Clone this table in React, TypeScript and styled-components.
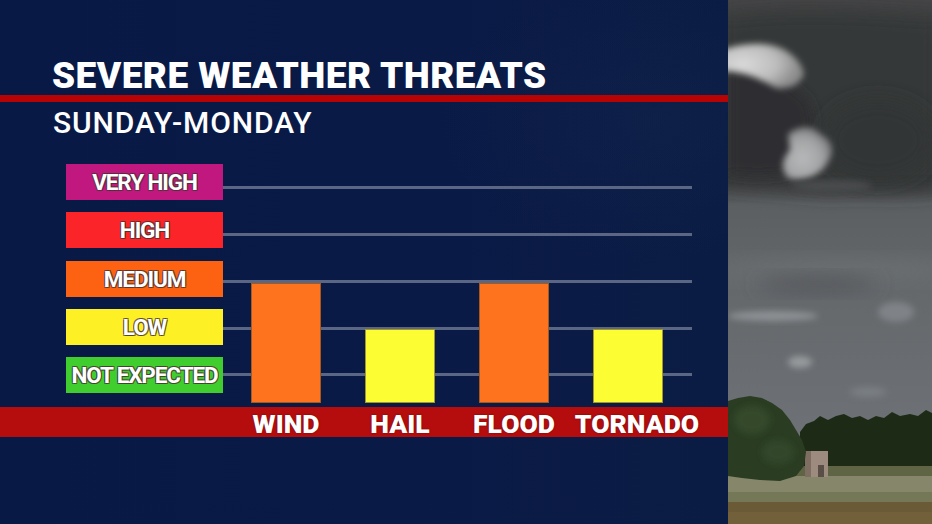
import React from "react";
import styled, { createGlobalStyle } from "styled-components";

const Global = createGlobalStyle`
  html, body { margin: 0; padding: 0; background: #0a1a45; }
  body { width: 932px; height: 524px; overflow: hidden; }
  * { box-sizing: border-box; }
`;

const Screen = styled.div`
  width: 932px;
  height: 524px;
  display: flex;
  font-family: Roboto, "Liberation Sans", sans-serif;
`;

const Panel = styled.div`
  width: 728px;
  height: 524px;
  display: flex;
  flex-direction: column;
  background:
    radial-gradient(ellipse 300px 200px at 650px 120px, rgba(30, 50, 90, 0.18), transparent 70%),
    linear-gradient(90deg, #091946 0%, #0a1a47 55%, #0b1c44 100%);
`;

const Title = styled.h1`
  margin: 0;
  padding: 56px 0 0 52px;
  height: 95px;
  font-size: 37px;
  line-height: 40px;
  font-weight: 900;
  color: #ffffff;
  letter-spacing: 0.45px;
  white-space: nowrap;
`;

const RedRule = styled.div`
  height: 7px;
  background: #b70303;
`;

const Subtitle = styled.h2`
  margin: 0;
  padding: 4px 0 0 53px;
  height: 62px;
  font-size: 30px;
  line-height: 34px;
  font-weight: 500;
  color: #ffffff;
  letter-spacing: 0.9px;
  white-space: nowrap;
`;

const Chart = styled.div`
  display: flex;
  height: 243px;
`;

const Legend = styled.div`
  margin-left: 66px;
  width: 157px;
  display: flex;
  flex-direction: column;
  gap: 12.25px;
`;

const Level = styled.div<{ $bg: string }>`
  height: 36px;
  background: ${(p) => p.$bg};
  display: flex;
  align-items: center;
  justify-content: center;
  color: #ffffff;
  font-size: 22.5px;
  font-weight: 700;
  letter-spacing: -1.1px;
  white-space: nowrap;
  text-shadow:
    -1px -1px 0 rgba(70, 50, 50, 0.7),
    1px -1px 0 rgba(70, 50, 50, 0.7),
    -1px 1px 0 rgba(70, 50, 50, 0.7),
    1px 1px 0 rgba(70, 50, 50, 0.7);
`;

const Plot = styled.div`
  width: 469px;
  height: 239px;
  padding-left: 6px;
  display: grid;
  grid-template-columns: 114px 114px 114px 114px;
  align-items: end;
  justify-items: center;
  background-image:
    linear-gradient(#5a6684, #5a6684),
    linear-gradient(#5a6684, #5a6684),
    linear-gradient(#5a6684, #5a6684),
    linear-gradient(#5a6684, #5a6684),
    linear-gradient(#5a6684, #5a6684);
  background-repeat: no-repeat;
  background-size: 100% 3px;
  background-position:
    0 22px,
    0 69px,
    0 116px,
    0 163px,
    0 209px;
`;

const Bar = styled.div<{ $bg: string }>`
  width: 70px;
  background: ${(p) => p.$bg};
  border: 1px solid rgba(90, 70, 30, 0.55);
`;

const Band = styled.div`
  height: 30px;
  background: #b50d0e;
  display: grid;
  grid-template-columns: 114px 114px 114px 132px;
  padding-left: 229px;
  align-items: center;
  justify-items: center;
`;

const Category = styled.div`
  color: #ffffff;
  font-size: 26.5px;
  font-weight: 900;
  letter-spacing: 0px;
  white-space: nowrap;
  line-height: 30px;
  padding-top: 2px;
  text-shadow: 0 0 2px rgba(60, 0, 0, 0.6);
`;

const Photo = styled.div`
  width: 204px;
  height: 524px;
  flex: none;
  background: #55585c;
  svg { display: block; }
`;

const levels = [
  { label: "VERY HIGH", bg: "#c0187e" },
  { label: "HIGH", bg: "#fb2428" },
  { label: "MEDIUM", bg: "#fd6212" },
  { label: "LOW", bg: "#fdf024" },
  { label: "NOT EXPECTED", bg: "#40ce2f" },
];

const threats = [
  { name: "WIND", h: 120, bg: "#fe731d" },
  { name: "HAIL", h: 74, bg: "#fdfd33" },
  { name: "FLOOD", h: 120, bg: "#fe731d" },
  { name: "TORNADO", h: 74, bg: "#fdfd33" },
];

function StormPhoto() {
  return (
    <svg width="204" height="524" viewBox="0 0 204 524">
      <defs>
        <linearGradient id="sky" x1="0" y1="0" x2="0" y2="1">
          <stop offset="0" stopColor="#454547" />
          <stop offset="0.34" stopColor="#38393a" />
          <stop offset="0.39" stopColor="#5c5f62" />
          <stop offset="0.55" stopColor="#64686b" />
          <stop offset="0.75" stopColor="#6b6f73" />
          <stop offset="1" stopColor="#72777b" />
        </linearGradient>
        <radialGradient id="lite1" cx="0.25" cy="0.45" r="0.7">
          <stop offset="0" stopColor="#dadada" />
          <stop offset="0.6" stopColor="#bdbdbd" />
          <stop offset="1" stopColor="#8a8a8b" />
        </radialGradient>
        <radialGradient id="lite2" cx="0.4" cy="0.6" r="0.65">
          <stop offset="0" stopColor="#b8b9ba" />
          <stop offset="0.6" stopColor="#a2a3a4" />
          <stop offset="1" stopColor="#6e6f70" />
        </radialGradient>
        <filter id="b10" x="-50%" y="-50%" width="200%" height="200%">
          <feGaussianBlur stdDeviation="10" />
        </filter>
        <filter id="b6" x="-50%" y="-50%" width="200%" height="200%">
          <feGaussianBlur stdDeviation="6" />
        </filter>
        <filter id="b3" x="-50%" y="-50%" width="200%" height="200%">
          <feGaussianBlur stdDeviation="3" />
        </filter>
        <filter id="b1" x="-50%" y="-50%" width="200%" height="200%">
          <feGaussianBlur stdDeviation="0.6" />
        </filter>
      </defs>
      <rect width="204" height="524" fill="url(#sky)" />
      {/* dark cloud mass */}
      <path
        d="M-10 15 C60 5 140 10 214 15 L214 188 C170 195 130 188 100 192 C70 188 30 186 -10 182 Z"
        fill="#363738"
        filter="url(#b10)"
      />
      <path
        d="M0 70 C30 62 60 80 80 100 C90 120 85 150 70 170 C50 178 20 176 0 174 Z"
        fill="#2e2f30"
        filter="url(#b6)"
      />
      <ellipse cx="150" cy="140" rx="55" ry="40" fill="#333435" filter="url(#b10)" />
      {/* light openings */}
      <path
        d="M-6 50 C18 42 40 42 55 49 C66 55 74 63 76 74 C72 84 62 90 48 88 C34 80 20 72 -6 71 Z"
        fill="url(#lite1)"
        filter="url(#b3)"
      />
      <path
        d="M60 134 C72 124 86 126 92 134 C104 140 108 150 100 162 C92 176 76 182 60 178 C52 170 54 158 62 150 Z"
        fill="url(#lite2)"
        filter="url(#b3)"
      />
      <ellipse cx="104" cy="186" rx="40" ry="6" fill="#4a4c4e" filter="url(#b3)" />
      {/* mid band */}
      <ellipse cx="110" cy="270" rx="130" ry="10" fill="#6c6f72" filter="url(#b10)" />
      <ellipse cx="90" cy="284" rx="60" ry="8" fill="#54575b" filter="url(#b10)" />
      <ellipse cx="45" cy="316" rx="45" ry="5" fill="#8e9194" filter="url(#b3)" />
      <ellipse cx="168" cy="312" rx="18" ry="10" fill="#7f8387" filter="url(#b3)" />
      <ellipse cx="72" cy="362" rx="12" ry="6" fill="#979a9d" filter="url(#b3)" />
      <ellipse cx="140" cy="392" rx="18" ry="5" fill="#7a7f83" filter="url(#b3)" />
      {/* field */}
      <rect x="0" y="464" width="204" height="14" fill="#5f6444" />
      <rect x="0" y="476" width="204" height="27" fill="#86866a" />
      <rect x="0" y="492" width="204" height="11" fill="#6f7452" opacity="0.8" />
      <rect x="0" y="502" width="204" height="22" fill="#6a5a35" />
      <rect x="0" y="512" width="204" height="12" fill="#74623c" opacity="0.8" />
      {/* tree line */}
      <path
        d="M72 432 L78 424 L86 421 L92 416 L100 420 L108 416 L116 414 L124 418 L132 416 L140 420 L148 416 L156 418 L164 412 L172 416 L182 414 L190 416 L198 410 L204 413 L204 466 L72 466 Z"
        fill="#1d2b18"
        filter="url(#b1)"
      />
      {/* building */}
      <rect x="77" y="451" width="23" height="26" fill="#9c8b7e" />
      <rect x="77" y="451" width="6" height="26" fill="#7e6e62" />
      <rect x="90" y="465" width="6" height="12" fill="#5a4f47" />
      {/* big tree */}
      <path
        d="M0 401 L10 398 L22 396 L34 398 L44 403 L54 410 L62 420 L68 430 L74 440 L78 452 L76 466 L68 476 L52 481 L32 480 L14 478 L0 476 Z"
        fill="#2a3c21"
        filter="url(#b1)"
      />
      <ellipse cx="24" cy="420" rx="18" ry="14" fill="#35492a" filter="url(#b3)" />
      <ellipse cx="50" cy="452" rx="16" ry="12" fill="#33472a" filter="url(#b3)" />
    </svg>
  );
}

export default function App() {
  return (
    <>
      <Global />
      <Screen>
        <Panel>
          <Title>SEVERE WEATHER THREATS</Title>
          <RedRule />
          <Subtitle>SUNDAY-MONDAY</Subtitle>
          <Chart>
            <Legend>
              {levels.map((l) => (
                <Level key={l.label} $bg={l.bg}>
                  {l.label}
                </Level>
              ))}
            </Legend>
            <Plot>
              {threats.map((t) => (
                <Bar key={t.name} $bg={t.bg} style={{ height: t.h }} />
              ))}
            </Plot>
          </Chart>
          <Band>
            {threats.map((t) => (
              <Category key={t.name}>{t.name}</Category>
            ))}
          </Band>
        </Panel>
        <Photo>
          <StormPhoto />
        </Photo>
      </Screen>
    </>
  );
}
